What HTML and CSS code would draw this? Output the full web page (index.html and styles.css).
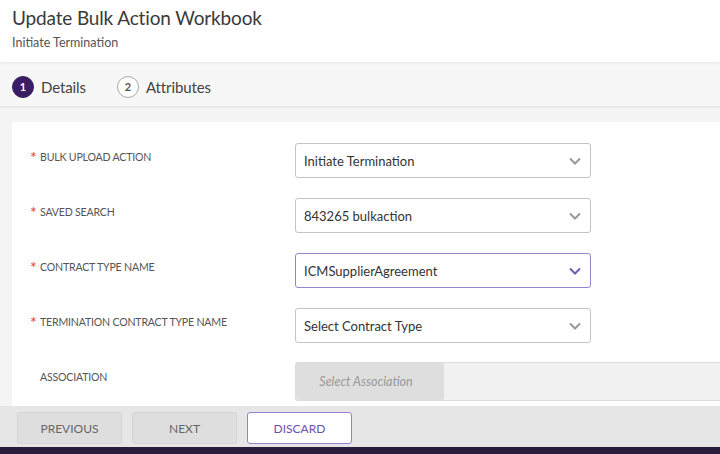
FILE: index.html
```html
<!DOCTYPE html>
<html>
<head>
<meta charset="utf-8">
<link rel="stylesheet" href="styles.css">
</head>
<body>
<div class="page">
  <header class="header">
    <h1 class="title">Update Bulk Action Workbook</h1>
    <div class="subtitle">Initiate Termination</div>
  </header>
  <nav class="stepper">
    <div class="step active"><span class="num">1</span><span class="step-label">Details</span></div>
    <div class="step"><span class="num">2</span><span class="step-label">Attributes</span></div>
  </nav>
  <main class="main">
    <section class="card">
      <div class="row">
        <div class="label"><span class="req">*</span>BULK UPLOAD ACTION</div>
        <div class="select"><span>Initiate Termination</span><svg class="chev" viewBox="0 0 12 8"><path d="M1 1.5l5 5 5-5" /></svg></div>
      </div>
      <div class="row">
        <div class="label"><span class="req">*</span>SAVED SEARCH</div>
        <div class="select"><span>843265 bulkaction</span><svg class="chev" viewBox="0 0 12 8"><path d="M1 1.5l5 5 5-5" /></svg></div>
      </div>
      <div class="row">
        <div class="label"><span class="req">*</span>CONTRACT TYPE NAME</div>
        <div class="select focus"><span>ICMSupplierAgreement</span><svg class="chev" viewBox="0 0 12 8"><path d="M1 1.5l5 5 5-5" /></svg></div>
      </div>
      <div class="row">
        <div class="label"><span class="req">*</span>TERMINATION CONTRACT TYPE NAME</div>
        <div class="select"><span>Select Contract Type</span><svg class="chev" viewBox="0 0 12 8"><path d="M1 1.5l5 5 5-5" /></svg></div>
      </div>
      <div class="row">
        <div class="label"><span class="req none">*</span>ASSOCIATION</div>
        <div class="assoc"><span class="assoc-btn">Select Association</span></div>
      </div>
    </section>
  </main>
  <footer class="footer">
    <button class="btn">PREVIOUS</button>
    <button class="btn">NEXT</button>
    <button class="btn discard">DISCARD</button>
  </footer>
  <div class="bottombar"></div>
</div>
</body>
</html>
```
FILE: styles.css
```css
* { box-sizing: border-box; }
html, body { margin: 0; padding: 0; }
body {
  font-family: "Lato", "Open Sans", sans-serif;
  background: #f4f4f4;
  color: #333;
  overflow: hidden;
}
.page {
  width: 720px;
  height: 454px;
  display: flex;
  flex-direction: column;
  overflow: hidden;
}
.header {
  height: 62px;
  background: #fff;
  padding: 5px 12px 0;
  box-shadow: 0 1px 3px rgba(0,0,0,0.08);
  position: relative;
  z-index: 1;
  flex: none;
}
.title {
  margin: 0;
  font-size: 19px;
  letter-spacing: -0.15px;
  font-weight: 400;
  color: #3a3a3a;
  line-height: 26px;
}
.subtitle {
  font-size: 12.5px;
  color: #555;
  margin-top: 4px;
}
.stepper {
  height: 46px;
  flex: none;
  background: #f7f7f7;
  border-bottom: 2px solid #e9e9e9;
  display: flex;
  align-items: center;
  padding: 5px 0 0 12px;
  gap: 31px;
}
.step { display: flex; align-items: center; gap: 7px; }
.num {
  width: 22px; height: 22px;
  border-radius: 50%;
  border: 1px solid #a9a9a9;
  background: #fff;
  display: flex; align-items: center; justify-content: center;
  font-size: 11px; font-weight: 700; color: #555;
}
.step.active .num { background: #3b1d63; border-color: #3b1d63; color: #fff; }
.step-label { font-size: 15px; color: #444; letter-spacing: -0.1px; }
.main {
  flex: 1;
  padding: 14px 0 0 12px;
  overflow: hidden;
}
.card {
  background: #fff;
  height: 100%;
  padding: 21px 0 0 18px;
  display: flex;
  flex-direction: column;
  gap: 20px;
}
.row { display: flex; align-items: flex-start; }
.label {
  width: 265px;
  flex: none;
  font-size: 10.6px;
  color: #555;
  padding-top: 8px;
  display: flex;
  align-items: flex-start;
  letter-spacing: -0.2px;
}
.req { color: #e53935; width: 10px; font-size: 16px; line-height: 10px; margin-top: 1px; }
.req.none { visibility: hidden; }
.select {
  width: 296px;
  height: 35px;
  border: 1px solid #c4c4c4;
  border-radius: 3px;
  background: #fff;
  display: flex;
  align-items: center;
  justify-content: space-between;
  padding: 0 9px 0 8px;
  font-size: 13px;
  color: #333;
}
.select.focus { border-color: #9b82cf; }
.chev { width: 12px; height: 8px; fill: none; stroke: #999; stroke-width: 2; }
.select.focus .chev { stroke: #7a5bb0; }
.assoc {
  flex: 1;
  height: 39px;
  margin-top: -1px;
  background: #f1f1f1;
  border: 1px solid #dcdcdc;
  border-right: none;
  border-radius: 3px 0 0 3px;
  display: flex;
  align-items: stretch;
}
.assoc-btn {
  width: 148px;
  background: #dedede;
  border-radius: 3px;
  display: flex; align-items: center; justify-content: center;
  padding-right: 8px;
  font-size: 12.5px;
  font-style: italic;
  color: #999;
}
.footer {
  height: 41px;
  flex: none;
  background: #e6e6e6;
  display: flex;
  align-items: flex-end;
  padding: 0 0 3px 17px;
  gap: 10px;
}
.btn {
  width: 105px;
  height: 32px;
  border: 1px solid #d3d3d3;
  background: #dedede;
  border-radius: 3px;
  font-family: inherit;
  font-size: 12px;
  color: #666;
  padding: 0;
}
.btn.discard { background: #fff; border-color: #9a7fd0; color: #6b4fb3; }
.bottombar { height: 7px; flex: none; background: #2a1a3e; }
```
